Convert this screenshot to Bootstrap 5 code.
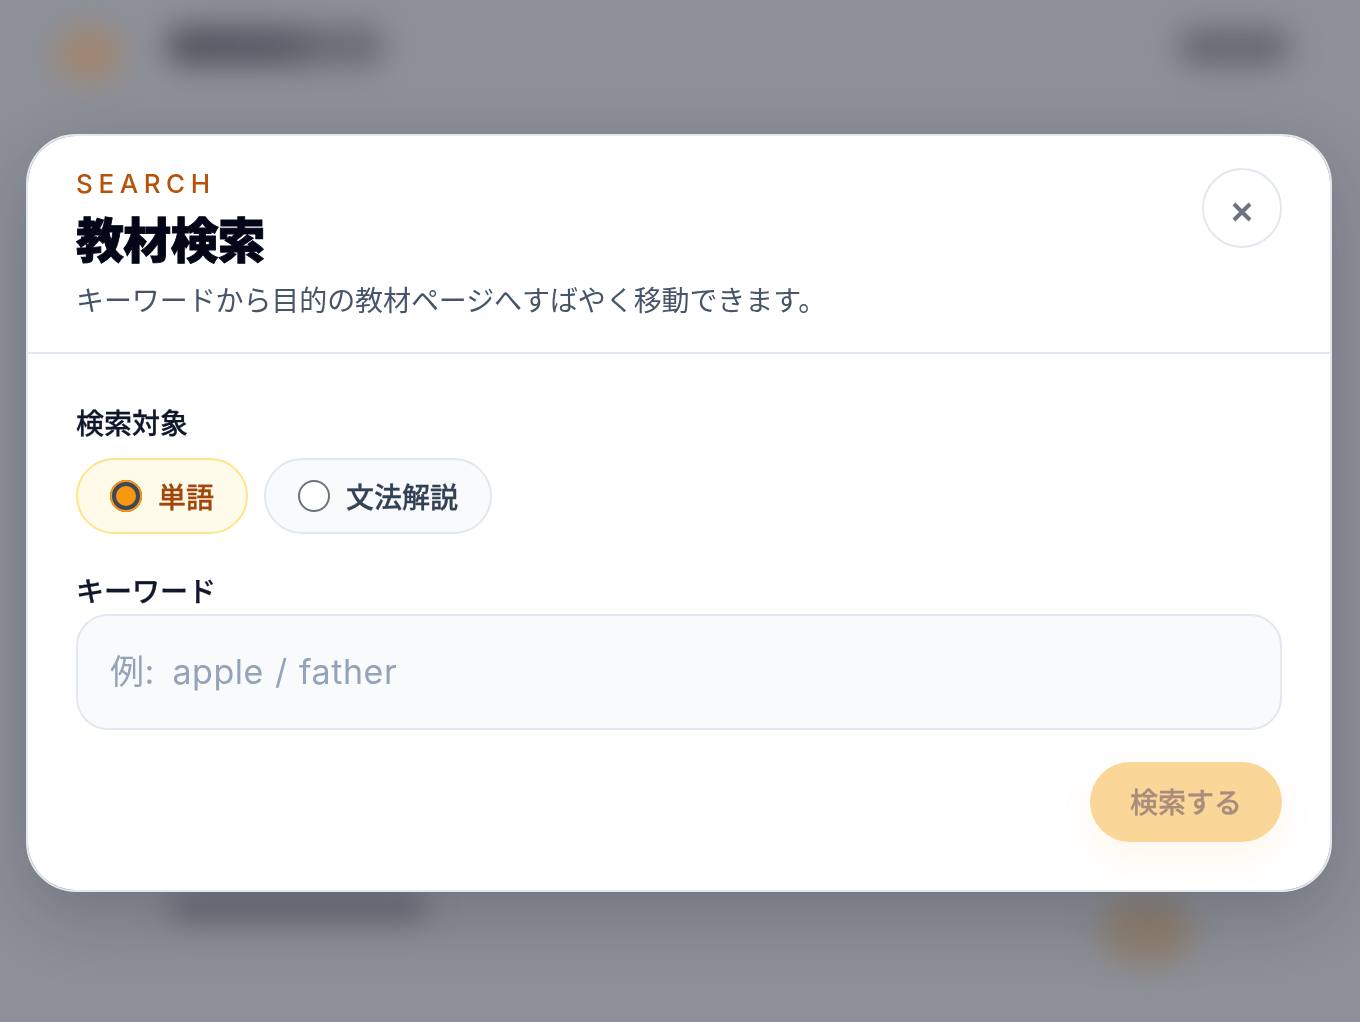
<!DOCTYPE html>
<html lang="ja">
<head>
<meta charset="utf-8">
<title>教材検索</title>
<link rel="stylesheet" href="https://cdn.jsdelivr.net/npm/bootstrap@5.3.0/dist/css/bootstrap.min.css">
<style>
html,body{height:100%;overflow:hidden}
body{background:#8d9098;font-family:Inter,"Noto Sans CJK JP",sans-serif}
.behind{height:1022px;filter:blur(15px);padding:20px 70px 56px 56px}
.blob-logo{width:66px;height:56px;border-radius:50%;background:#a08670;margin-top:6px}
.blob-title{width:218px;height:40px;margin:-10px 0 0 44px;border-radius:20px;background:linear-gradient(90deg,#4f545e 0%,#555a64 55%,#6b6e76 75%,#64676f 100%)}
.blob-nav{width:112px;height:36px;margin-top:-8px;border-radius:18px;background:#63666e}
.blob-foot{width:256px;height:22px;margin-left:114px;border-radius:11px;background:#5f626b;margin-bottom:48px}
.blob-cta{width:96px;height:70px;border-radius:50%;background:#8f8070;margin-right:95px}
.scrim{padding:134px 28px 0 26px}
.sheet{border:2px solid #e2e8f0;border-radius:50px;box-shadow:0 24px 70px rgba(15,23,42,.22);height:758px}
.sheet-head{padding:33px 48px 0;border-bottom:2px solid #e2e8f0;height:218px}
.eyebrow{font-size:26px;line-height:30px;letter-spacing:.215em;color:#b45309;font-weight:500}
.sheet-title{font-size:48px;line-height:56px;font-weight:900;color:#020617;margin:14px 0 0;letter-spacing:-.8px;-webkit-text-stroke:.9px #020617}
.sheet-sub{font-size:28px;line-height:40px;color:#475569;margin:12px 0 0;letter-spacing:-.09px}
.closer{width:80px;height:80px;border:2px solid #e2e8f0;border-radius:50%;background:#fff;flex:none;padding:8px 0 0;margin-top:-1px}
.field-label{font-size:28px;line-height:36px;font-weight:500;color:#0f172a;display:block;-webkit-text-stroke:.3px #0f172a}
.sheet-body{padding:52px 48px 0}
.choice{height:76px;border:2px solid #e2e8f0;border-radius:38px;background:#f8fafc;padding:0 32px;gap:16px;font-size:28px;font-weight:500;color:#334155;margin:0;-webkit-text-stroke:.3px currentColor}
.choice span{position:relative;top:2px}
.choice.on{border-color:#fde68a;background:#fffbeb;color:#a1470b}
.dot{appearance:none;width:32px;height:32px;border-radius:50%;border:2px solid #6b7280;background:#fff;margin:0;flex:none}
.dot:checked{border:6px solid #3f4759;background:#f7980f;outline:2px solid #f7980f;outline-offset:-2px}
.gap-kw{margin-top:40px;margin-bottom:4px}
.keyword{height:116px;border:2px solid #e2e8f0;border-radius:32px;background:#f8fafc;padding:0 32px 2px;font-size:34px;color:#0f172a;letter-spacing:.55px;word-spacing:1px}
.keyword::placeholder{color:#94a3b8;opacity:1}
.keyword:focus{background:#f8fafc;border-color:#e2e8f0;box-shadow:none}
.go-row{margin-top:32px}
.go{width:192px;height:80px;border:0;border-radius:40px;background:#fbd699;color:#a98c7b;font-size:28px;font-weight:500;padding:2px 0 0;-webkit-text-stroke:.3px currentColor;box-shadow:0 16px 36px rgba(245,158,11,.08);opacity:1}
.go:disabled{background:#fbd699;color:#a98c7b;opacity:1}
</style>
</head>
<body>
<div class="behind d-flex flex-column" aria-hidden="true">
  <div class="d-flex align-items-center">
    <div class="blob-logo"></div>
    <div class="blob-title"></div>
    <div class="blob-nav ms-auto"></div>
  </div>
  <div class="d-flex align-items-center justify-content-between mt-auto">
    <div class="blob-foot"></div>
    <div class="blob-cta"></div>
  </div>
</div>

<div class="scrim position-fixed top-0 start-0 w-100 h-100">
  <div class="sheet modal-content bg-white" role="dialog" aria-modal="true">
    <div class="sheet-head d-flex justify-content-between align-items-start">
      <div>
        <div class="eyebrow">SEARCH</div>
        <h2 class="sheet-title">教材検索</h2>
        <p class="sheet-sub">キーワードから目的の教材ページへすばやく移動できます。</p>
      </div>
      <button type="button" class="closer d-flex align-items-center justify-content-center" aria-label="閉じる">
        <svg width="22" height="22" viewBox="0 0 22 22"><path d="M3 3 19 19M19 3 3 19" stroke="#6b7280" stroke-width="4" fill="none"/></svg>
      </button>
    </div>
    <form class="sheet-body" onsubmit="return false">
      <span class="field-label">検索対象</span>
      <div class="d-flex gap-3 mt-3">
        <label class="choice on d-flex align-items-center"><input class="dot" type="radio" name="scope" checked><span>単語</span></label>
        <label class="choice d-flex align-items-center"><input class="dot" type="radio" name="scope"><span>文法解説</span></label>
      </div>
      <label class="field-label gap-kw" for="kw">キーワード</label>
      <input id="kw" class="keyword form-control" type="text" placeholder="例:&#8194;apple / father">
      <div class="d-flex justify-content-end go-row">
        <button class="go btn" type="submit" disabled>検索する</button>
      </div>
    </form>
  </div>
</div>
<script src="https://cdn.jsdelivr.net/npm/bootstrap@5.3.0/dist/js/bootstrap.bundle.min.js"></script>
</body>
</html>
